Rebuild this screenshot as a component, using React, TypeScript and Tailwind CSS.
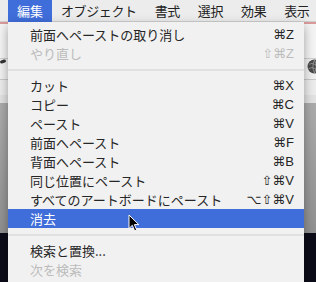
const jp = "font-['Noto_Sans_CJK_JP',sans-serif]";
const sc = "font-['Liberation_Sans','DejaVu_Sans',sans-serif]";

type Item = { label: string; key?: string; disabled?: boolean; active?: boolean };

const groups: Item[][] = [
  [
    { label: '前面へペーストの取り消し', key: '⌘Z' },
    { label: 'やり直し', key: '⇧⌘Z', disabled: true },
  ],
  [
    { label: 'カット', key: '⌘X' },
    { label: 'コピー', key: '⌘C' },
    { label: 'ペースト', key: '⌘V' },
    { label: '前面へペースト', key: '⌘F' },
    { label: '背面へペースト', key: '⌘B' },
    { label: '同じ位置にペースト', key: '⇧⌘V' },
    { label: 'すべてのアートボードにペースト', key: '⌥⇧⌘V' },
    { label: '消去', active: true },
  ],
  [
    { label: '検索と置換...' },
    { label: '次を検索', disabled: true },
  ],
];

const menus = ['オブジェクト', '書式', '選択', '効果', '表示'];

const Row = ({ item }: { item: Item }) => (
  <div
    className={`flex h-[19px] items-center justify-between pl-[22px] pr-[10px] text-[13px] ${
      item.active ? 'bg-[#3f6dd9] text-white' : item.disabled ? 'text-[#bcbcbc]' : 'text-[#262626]'
    }`}
  >
    <span className={jp}>{item.label}</span>
    {item.key && <span className={`${sc} text-[13px]`}>{item.key}</span>}
  </div>
);

const Cursor = () => (
  <svg width="12" height="18" viewBox="0 0 12 18" className="absolute left-[128px] top-[214px]">
    <path d="M1 1 L1 14.5 L4.3 11.3 L6.6 16.8 L8.7 15.9 L6.4 10.6 L10.8 10.6 Z" fill="#000" stroke="#fff" strokeWidth="1" strokeLinejoin="round" />
  </svg>
);

const Globe = () => (
  <svg width="15" height="15" viewBox="0 0 14 14">
    <circle cx="7" cy="7" r="6.5" fill="#4a4a4a" />
    <path d="M2 5 Q5 3 7 5 T12 5 M1.5 9 Q5 7 7 9 T12.5 9 M7 1 Q4 7 7 13 M7 1 Q10 7 7 13" stroke="#9a9a9a" strokeWidth="0.8" fill="none" />
  </svg>
);

export default function App() {
  return (
    <div className="relative h-[282px] w-[316px] overflow-hidden bg-[#0b0c18]">
      <div className="flex h-[22px] items-center whitespace-nowrap border-b border-[#cfcfcf] bg-[#ececec] pl-2 text-[13px] text-[#222]">
        <div className={`${jp} flex h-[22px] shrink-0 items-center bg-[#3f6dd9] px-[9px] text-white`}>編集</div>
        {menus.map((m) => (
          <div key={m} className={`${jp} shrink-0 px-[9px] tracking-[-0.4px]`}>
            {m}
          </div>
        ))}
      </div>
      <div className="h-[2px] bg-[#d99a9a]" />
      <div className="h-[34px] bg-[#f4f4f4]" />
      <div className="h-[21px] border-t border-[#cfcfcf] bg-[#f1f1f1]" />
      <div className="h-[16px] border-t border-[#c9c9c9] bg-[#ececec]" />
      <div className="h-[8px] bg-[#e2e2e2]" />
      <div className="h-[130px] bg-gradient-to-b from-[#ababab] to-[#909090]" />

      <div className="absolute left-0 top-[60px] h-[3px] w-[6px] rotate-[-20deg] rounded-sm bg-[#333]" />
      <div className="absolute right-[-6px] top-[59px]">
        <Globe />
      </div>

      <div className="absolute left-2 top-[22px] w-[296px] bg-[#f1f1f1] pb-[3px] pt-[3px] shadow-[0_4px_10px_rgba(0,0,0,0.35)]">
        {groups.map((g, i) => (
          <div key={i}>
            {i > 0 && (
              <div className="flex h-[13px] items-center">
                <div className="h-[2px] w-full bg-[#e0e0e0]" />
              </div>
            )}
            {g.map((it) => (
              <Row key={it.label} item={it} />
            ))}
          </div>
        ))}
      </div>
      <Cursor />
    </div>
  );
}
